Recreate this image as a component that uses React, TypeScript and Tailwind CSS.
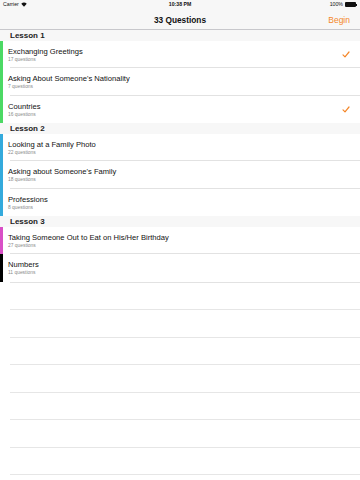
import React from "react";

type Item = { title: string; count: number; color: string; done?: boolean };
type Lesson = { name: string; items: Item[] };

const lessons: Lesson[] = [
    {
        name: "Lesson 1",
        items: [
            { title: "Exchanging Greetings", count: 17, color: "bg-[#4cd964]", done: true },
            { title: "Asking About Someone's Nationality", count: 7, color: "bg-[#4cd964]" },
            { title: "Countries", count: 16, color: "bg-[#4cd964]", done: true },
        ],
    },
    {
        name: "Lesson 2",
        items: [
            { title: "Looking at a Family Photo", count: 22, color: "bg-[#34aadc]" },
            { title: "Asking about Someone's Family", count: 18, color: "bg-[#34aadc]" },
            { title: "Professions", count: 8, color: "bg-[#34aadc]" },
        ],
    },
    {
        name: "Lesson 3",
        items: [
            { title: "Taking Someone Out to Eat on His/Her Birthday", count: 27, color: "bg-[#d94fc6]" },
            { title: "Numbers", count: 11, color: "bg-black" },
        ],
    },
];

function Check() {
    return (
        <svg width="8" height="7" viewBox="0 0 8 7" fill="none">
            <path d="M1 3.8 L3 5.8 L7 1" stroke="#f4872a" strokeWidth="1.2" strokeLinecap="round" strokeLinejoin="round" />
        </svg>
    );
}

function Row({ item, last }: { item: Item; last: boolean }) {
    return (
        <div className="relative h-[27.5px] flex items-stretch bg-white">
            <div className={`w-[3px] ${item.color}`}></div>
            <div className="flex-1 flex items-center pl-[5px] pr-[10px] relative">
                <div className="flex-1 flex flex-col justify-center pt-px">
                    <p className="text-[7.6px] leading-[10px] text-[#111]">{item.title}</p>
                    <p className="text-[4.9px] leading-[6px] text-[#8a8a8a]">{item.count} questions</p>
                </div>
                {item.done && <Check />}
                {!last && <div className="absolute bottom-0 left-[7px] right-0 h-px bg-[#e2e2e2]"></div>}
            </div>
        </div>
    );
}

export default function App() {
    return (
        <div className="w-[360px] h-[480px] bg-white overflow-hidden font-['Liberation_Sans',Arial,sans-serif] select-none">
            {/* STATUS + NAV */}
            <div className="bg-[#f7f7f7] border-b border-[#c8c8cc]">
                <div className="h-[10px] flex items-center justify-between px-[3px] text-[5.2px] text-[#111]">
                    <div className="flex items-center gap-[2px] w-[60px]">
                        <span>Carrier</span>
                        <svg width="6" height="5" viewBox="0 0 12 9">
                            <path d="M6 9 L0.5 3 A8 8 0 0 1 11.5 3 Z" fill="#111" />
                        </svg>
                    </div>
                    <span className="font-bold">10:38 PM</span>
                    <div className="flex items-center justify-end gap-[2px] w-[60px]">
                        <span>100%</span>
                        <div className="flex items-center">
                            <div className="w-[11px] h-[5px] bg-[#111] rounded-[1px]"></div>
                            <div className="w-[1px] h-[2px] bg-[#111]"></div>
                        </div>
                    </div>
                </div>
                <div className="h-[19px] relative flex items-center justify-center pt-px">
                    <span className="text-[8.3px] font-bold text-[#111]">33 Questions</span>
                    <span className="absolute right-[10px] text-[8.5px] text-[#f4872a]">Begin</span>
                </div>
            </div>

            {/* LIST */}
            {lessons.map((lesson) => (
                <div key={lesson.name}>
                    <div className="h-[10.5px] bg-[#f7f7f7] flex items-center pl-[10px] pt-px">
                        <span className="text-[8px] font-bold text-[#222]">{lesson.name}</span>
                    </div>
                    {lesson.items.map((item, i) => (
                        <Row key={item.title} item={item} last={i === lesson.items.length - 1} />
                    ))}
                </div>
            ))}
            <div className="h-px bg-[#e2e2e2] ml-[10px]"></div>

            {/* EMPTY ROWS */}
            {Array.from({ length: 7 }).map((_, i) => (
                <div key={i} className="h-[27.5px] border-b border-[#e6e6e6] ml-[10px]"></div>
            ))}
        </div>
    );
}
